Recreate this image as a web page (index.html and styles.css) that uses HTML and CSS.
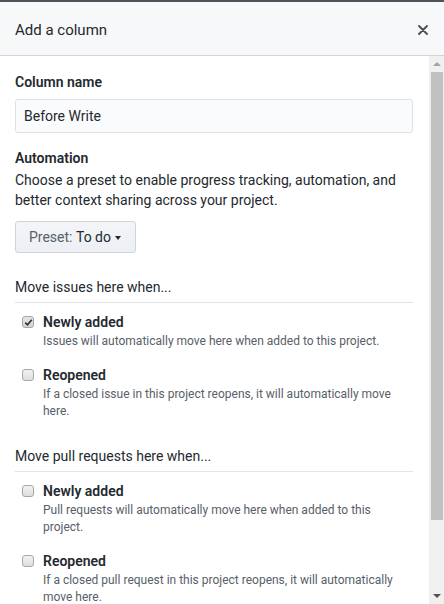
FILE: index.html
```html
<!DOCTYPE html>
<html>
<head>
<meta charset="utf-8">
<title>Add a column</title>
<link rel="stylesheet" href="styles.css">
</head>
<body>
<div class="dialog">
  <header class="dlg-head">
    <h1 class="dlg-title">Add a column</h1>
    <button class="close-btn" type="button" aria-label="Close">
      <svg width="10" height="10" viewBox="0 0 10 10"><path d="M1 1L9 9M9 1L1 9" stroke="#444d56" stroke-width="1.8" stroke-linecap="round"/></svg>
    </button>
  </header>
  <div class="dlg-main">
    <div class="dlg-body">
      <label class="field-label">Column name</label>
      <div class="text-input">Before Write</div>

      <div class="field-label automation">Automation</div>
      <p class="field-desc">Choose a preset to enable progress tracking, automation, and better context sharing across your project.</p>

      <button class="preset-btn" type="button"><span class="muted">Preset:</span>&nbsp;To do <span class="caret"></span></button>

      <section class="group first">
        <h2 class="group-title">Move issues here when...</h2>
        <div class="items">
          <div class="item">
            <span class="cb checked"><svg width="9" height="9" viewBox="0 0 9 9"><path d="M1.3 4.6L3.5 6.8L7.8 1.8" fill="none" stroke="#333" stroke-width="1.7"/></svg></span>
            <div class="item-text">
              <div class="item-label">Newly added</div>
              <div class="item-desc">Issues will automatically move here when added to this project.</div>
            </div>
          </div>
          <div class="item">
            <span class="cb"></span>
            <div class="item-text">
              <div class="item-label">Reopened</div>
              <div class="item-desc">If a closed issue in this project reopens, it will automatically move here.</div>
            </div>
          </div>
        </div>
      </section>

      <section class="group">
        <h2 class="group-title">Move pull requests here when...</h2>
        <div class="items">
          <div class="item">
            <span class="cb"></span>
            <div class="item-text">
              <div class="item-label">Newly added</div>
              <div class="item-desc">Pull requests will automatically move here when added to this project.</div>
            </div>
          </div>
          <div class="item">
            <span class="cb"></span>
            <div class="item-text">
              <div class="item-label">Reopened</div>
              <div class="item-desc">If a closed pull request in this project reopens, it will automatically move here.</div>
            </div>
          </div>
        </div>
      </section>
    </div>
    <div class="scrollbar">
      <div class="sb-btn"><span class="tri-up"></span></div>
      <div class="sb-track"><div class="sb-thumb"></div></div>
      <div class="sb-btn"><span class="tri-down"></span></div>
    </div>
  </div>
</div>
</body>
</html>
```
FILE: styles.css
```css
html, body {
  margin: 0;
  padding: 0;
}
body {
  height: 604px;
  overflow: hidden;
  background: #fff;
  font-family: Roboto, "Liberation Sans", sans-serif;
  font-size: 14px;
  color: #24292e;
}
.dialog {
  height: 602px;
  border-top: 2px solid #4d535a;
  display: flex;
  flex-direction: column;
}
.dlg-head {
  height: 54px;
  flex: none;
  box-sizing: border-box;
  padding: 2px 16px 0 15px;
  background: #f6f8fa;
  border-bottom: 1px solid #d1d5da;
  display: flex;
  align-items: center;
  justify-content: space-between;
}
.dlg-title {
  margin: 0;
  font-size: 15px;
  font-weight: 400;
  line-height: 20px;
  color: #24292e;
}
.close-btn {
  border: 0;
  background: none;
  padding: 0;
  width: 10px;
  height: 10px;
  display: flex;
}
.dlg-main {
  flex: 1;
  min-height: 0;
  display: flex;
}
.dlg-body {
  flex: 1;
  min-width: 0;
  overflow: hidden;
  padding: 16px 16px 0 15px;
}
.field-label {
  display: block;
  font-weight: 600;
  line-height: 20px;
}
.text-input {
  margin-top: 7px;
  height: 34px;
  box-sizing: border-box;
  border: 1px solid #dfe2e5;
  border-radius: 3px;
  background: #fafbfc;
  padding: 0 8px;
  line-height: 32px;
  color: #24292e;
}
.automation {
  margin-top: 15px;
}
.field-desc {
  margin: 2px 0 0;
  line-height: 20px;
  color: #24292e;
}
.preset-btn {
  margin-top: 11px;
  height: 32px;
  box-sizing: border-box;
  padding: 0 14px 0 13px;
  border: 1px solid #d1d5da;
  border-radius: 3px;
  background: linear-gradient(#f3f5f8, #eceff3);
  font: inherit;
  color: #24292e;
  display: inline-flex;
  align-items: center;
}
.muted {
  color: #586069;
}
.caret {
  width: 0;
  height: 0;
  margin-left: 4px;
  margin-top: 1px;
  border-left: 3.5px solid transparent;
  border-right: 3.5px solid transparent;
  border-top: 4px solid #24292e;
}
.group {
  margin-top: 26px;
}
.group.first {
  margin-top: 24px;
}
.group-title {
  margin: 0;
  font-size: 14px;
  font-weight: 400;
  line-height: 20px;
  padding-bottom: 5px;
  border-bottom: 1px solid #e1e4e8;
}
.items {
  padding: 9px 0 0 7px;
  display: flex;
  flex-direction: column;
  gap: 15px;
}
.item {
  display: flex;
  align-items: flex-start;
  gap: 9px;
}
.cb {
  flex: none;
  width: 12px;
  height: 12px;
  margin-top: 4px;
  box-sizing: border-box;
  border: 1px solid #a6a6a6;
  border-radius: 3px;
  background: linear-gradient(#f2f2f2, #dedede);
  display: flex;
  align-items: center;
  justify-content: center;
}
.cb.checked {
  background: linear-gradient(#e4e4e4, #d4d4d4);
}
.item-label {
  font-weight: 600;
  line-height: 20px;
}
.item-desc {
  margin-top: 1px;
  font-size: 12px;
  line-height: 17px;
  color: #586069;
}
.scrollbar {
  width: 15px;
  flex: none;
  background: #f0f0f0;
  display: flex;
  flex-direction: column;
}
.sb-btn {
  height: 16px;
  flex: none;
  display: flex;
  align-items: center;
  justify-content: center;
}
.sb-track {
  flex: 1;
  padding: 0 1px 0 2px;
}
.sb-thumb {
  height: 448px;
  background: #c1c1c1;
}
.tri-up {
  width: 0;
  height: 0;
  border-left: 4px solid transparent;
  border-right: 4px solid transparent;
  border-bottom: 4px solid #a3a3a3;
}
.tri-down {
  width: 0;
  height: 0;
  border-left: 4px solid transparent;
  border-right: 4px solid transparent;
  border-top: 4px solid #505050;
}
```
